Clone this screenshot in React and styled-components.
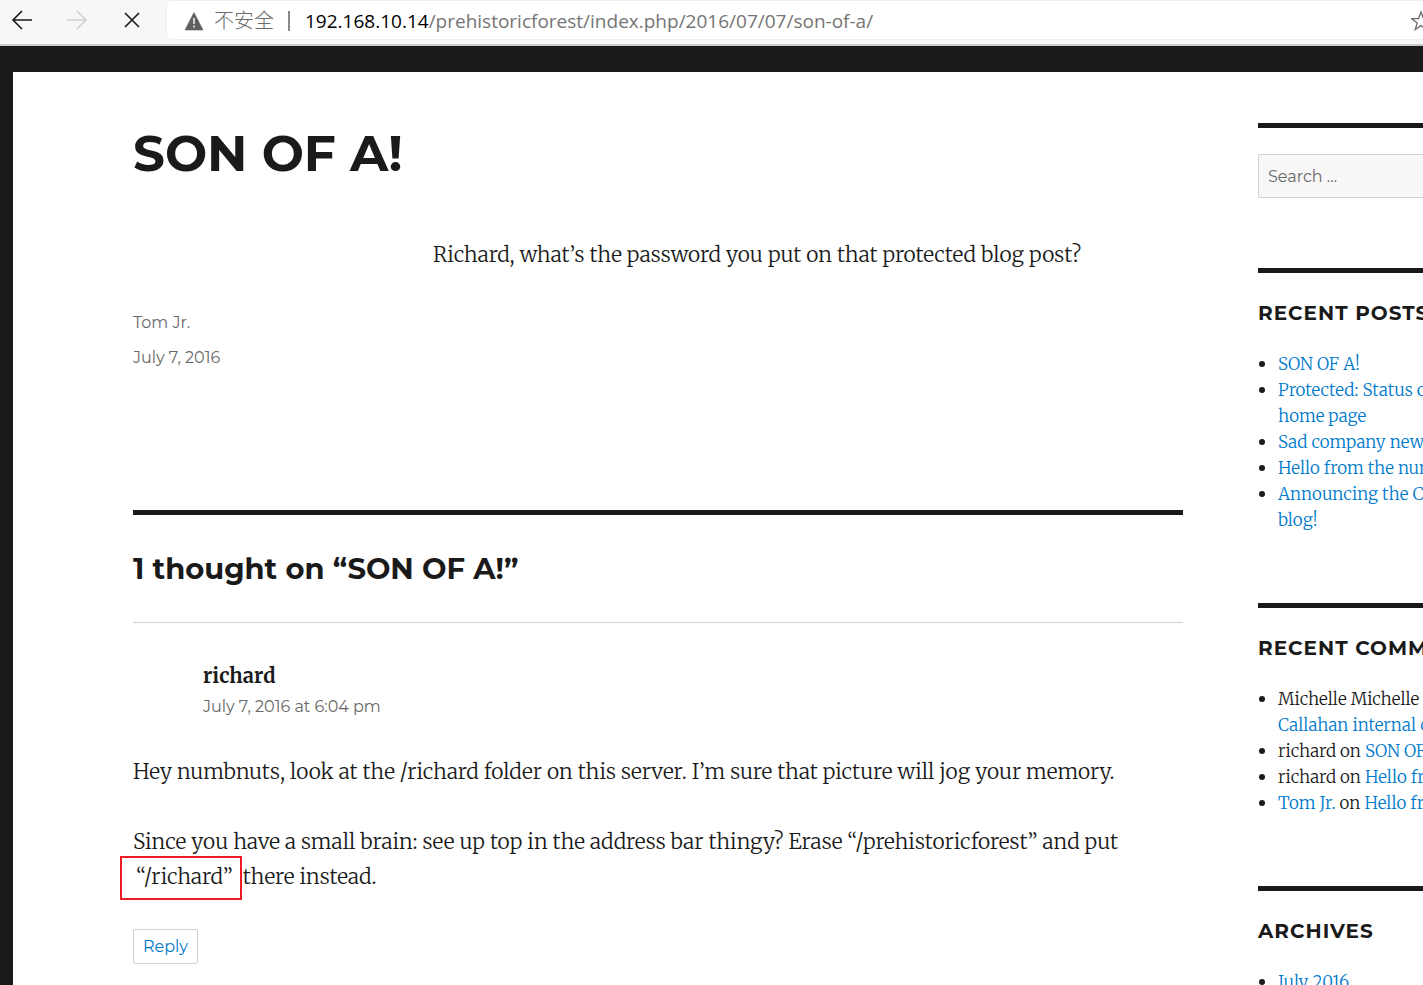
import React from 'react';
import styled, { createGlobalStyle } from 'styled-components';

const ink = '#1a1a1a';
const muted = '#686868';
const blue = '#007acc';
const sans = "Montserrat, Inter, 'Liberation Sans', sans-serif";
const serif = "Merriweather, 'Liberation Serif', serif";
const chromeFont = "'Segoe UI', 'Open Sans', 'Noto Sans CJK SC', sans-serif";

const GlobalStyle = createGlobalStyle`
  *, *::before, *::after { box-sizing: border-box; }
  body { margin: 0; background: ${ink}; color: ${ink}; font-family: ${serif}; font-kerning: none; }
  h1, h2, p, ul, ol { margin: 0; padding: 0; }
  h1, h2 { font-kerning: normal; }
`;

const Shell = styled.div`
  display: flex;
  flex-direction: column;
  height: 100vh;
  overflow: hidden;
`;

const Toolbar = styled.header`
  display: flex;
  align-items: center;
  flex: none;
  height: 46px;
  padding: 0 0 4px 10px;
  background: #f7f7f7;
  border-bottom: 2px solid #cbcbcb;
`;

const NavButton = styled.button`
  display: flex;
  align-items: center;
  justify-content: center;
  width: 24px;
  height: 24px;
  margin-right: ${(p) => p.$gap || 31}px;
  padding: 0;
  border: 0;
  background: none;
  color: ${(p) => (p.disabled ? '#d0d0d0' : ink)};

  svg {
    flex: none;
  }
`;

const AddressBar = styled.div`
  display: flex;
  align-items: center;
  flex: 1;
  min-width: 0;
  height: 38px;
  padding: 1px 0 0 17px;
  background: #fff;
  border-radius: 5px 0 0 5px;
  box-shadow: 0 0 3px rgba(0, 0, 0, 0.1);
  font: 20px/28px ${chromeFont};
  color: #6b6b6b;
  white-space: nowrap;
`;

const Insecure = styled.span`
  margin-left: 10px;
  font-weight: 300;
`;

const Divider = styled.span`
  width: 2px;
  height: 20px;
  margin: 0 15px 0 14px;
  background: #8a8a8a;
`;

const Url = styled.span`
  flex: 1;
  font-size: 19px;
  color: #757575;
`;

const Host = styled.span`
  color: #000;
`;

const StarButton = styled(NavButton)`
  width: 12px;
  margin: 0;
  justify-content: flex-start;
  overflow: hidden;
  color: #6b6b6b;
`;

const Viewport = styled.div`
  flex: 1;
  min-height: 0;
  padding: 26px 0 0 13px;
  overflow: hidden;
`;

const Site = styled.div`
  display: flex;
  gap: 75px;
  min-height: 100%;
  padding: 51px 0 0 120px;
  background: #fff;
`;

const Main = styled.main`
  flex: 1;
  min-width: 0;
`;

const Title = styled.h1`
  margin-bottom: 52px;
  font: 700 50px/62px ${sans};
`;

const PostText = styled.p`
  margin: 0 0 33px 300px;
  font: 300 21px/35px ${serif};
`;

const Meta = styled.footer`
  display: flex;
  flex-direction: column;
  margin-bottom: 135px;
  font: 16px/35px ${sans};
  color: ${muted};
`;

const Comments = styled.section`
  border-top: 5px solid ${ink};
  padding-top: 36px;
`;

const CommentsTitle = styled.h2`
  margin-bottom: 35px;
  font: 700 29px/36px ${sans};
`;

const Comment = styled.article`
  padding-top: 35px;
  border-top: 1px solid #d1d1d1;
`;

const CommentHead = styled.header`
  padding-left: 70px;
  margin-bottom: 33px;
`;

const Author = styled.div`
  font-size: 20px;
  line-height: 35px;
  font-weight: 700;
`;

const CommentDate = styled.time`
  display: block;
  font: 16px/28px ${sans};
  color: ${muted};
`;

const CommentText = styled.p`
  margin-bottom: 35px;
  font: 300 21px/35px ${serif};
`;

const Marked = styled.span`
  position: relative;
  display: inline-block;
  padding: 0 5px 0 3px;

  &::after {
    content: '';
    position: absolute;
    inset: -3px -4px -6px -13px;
    border: 2px solid #ed1c24;
  }
`;

const Reply = styled.button`
  display: block;
  height: 35px;
  padding: 0 9px;
  border: 1px solid #d1d1d1;
  border-radius: 2px;
  background: #fff;
  font: 16px/33px ${sans};
  color: ${blue};
`;

const Sidebar = styled.aside`
  flex: none;
  width: 165px;
`;

const Widget = styled.section`
  margin-bottom: 70px;
  padding-top: 26px;
  border-top: 5px solid ${ink};
`;

const WidgetTitle = styled.h2`
  margin-bottom: 24px;
  font: 700 20px/28px ${sans};
  letter-spacing: 1px;
  text-transform: uppercase;
  white-space: nowrap;
`;

const SearchInput = styled.input`
  display: block;
  width: 100%;
  height: 44px;
  padding: 0 9px;
  border: 1px solid #d1d1d1;
  border-right: 0;
  border-radius: 2px 0 0 2px;
  background: #f7f7f7;
  font: 16px/24px ${sans};

  &::placeholder {
    color: ${muted};
    opacity: 1;
  }
`;

const List = styled.ul`
  padding-left: 20px;
  font: 300 17px/26px ${serif};
  white-space: nowrap;
`;

const Item = styled.li`
  &::marker {
    font-size: 18px;
  }
`;

const Link = styled.a`
  color: ${blue};
  text-decoration: none;
`;

const BackIcon = () => (
  <svg width="24" height="24" viewBox="0 0 24 24" fill="none" stroke="currentColor" strokeWidth="1.6">
    <path d="M22 12H3M12 3L3 12l9 9" />
  </svg>
);

const ForwardIcon = () => (
  <svg width="24" height="24" viewBox="0 0 24 24" fill="none" stroke="currentColor" strokeWidth="1.6">
    <path d="M2 12h19M12 3l9 9-9 9" />
  </svg>
);

const StopIcon = () => (
  <svg width="24" height="24" viewBox="0 0 24 24" fill="none" stroke="currentColor" strokeWidth="1.6">
    <path d="M5 5l14 14M19 5L5 19" />
  </svg>
);

const WarningIcon = () => (
  <svg width="20" height="20" viewBox="0 0 20 20">
    <path d="M10 1.5L19 19H1z" fill="#606060" stroke="#606060" strokeWidth="0.6" strokeLinejoin="round" />
    <path d="M10 7v6M10 14.5v2" stroke="#fff" strokeWidth="1.4" />
  </svg>
);

const StarIcon = () => (
  <svg width="24" height="24" viewBox="0 0 24 24" fill="none" stroke="currentColor" strokeWidth="1.3">
    <path d="M10 3l2.4 6.5 6.9.2-5.5 4.2 2 6.6L10 16.6l-5.8 3.9 2-6.6L.8 9.7l6.8-.2z" />
  </svg>
);

export default function App() {
  return (
    <>
      <GlobalStyle />
      <Shell>
        <Toolbar>
          <NavButton aria-label="Back"><BackIcon /></NavButton>
          <NavButton aria-label="Forward" disabled><ForwardIcon /></NavButton>
          <NavButton aria-label="Stop" $gap={23}><StopIcon /></NavButton>
          <AddressBar>
            <WarningIcon />
            <Insecure lang="zh-CN">不安全</Insecure>
            <Divider />
            <Url><Host>192.168.10.14</Host>/prehistoricforest/index.php/2016/07/07/son-of-a/</Url>
            <StarButton aria-label="Add to favorites"><StarIcon /></StarButton>
          </AddressBar>
        </Toolbar>
        <Viewport>
          <Site>
            <Main>
              <Title>SON OF A!</Title>
              <PostText>Richard, what’s the password you put on that protected blog post?</PostText>
              <Meta>
                <span>Tom Jr.</span>
                <time>July 7, 2016</time>
              </Meta>
              <Comments>
                <CommentsTitle>1 thought on “SON OF A!”</CommentsTitle>
                <Comment>
                  <CommentHead>
                    <Author>richard</Author>
                    <CommentDate>July 7, 2016 at 6:04 pm</CommentDate>
                  </CommentHead>
                  <CommentText>
                    Hey numbnuts, look at the /richard folder on this server. I’m sure that picture will jog your memory.
                  </CommentText>
                  <CommentText>
                    Since you have a small brain: see up top in the address bar thingy? Erase “/prehistoricforest” and put{' '}
                    <Marked>“/richard”</Marked> there instead.
                  </CommentText>
                  <Reply>Reply</Reply>
                </Comment>
              </Comments>
            </Main>
            <Sidebar>
              <Widget>
                <SearchInput type="search" aria-label="Search for" placeholder="Search …" />
              </Widget>
              <Widget>
                <WidgetTitle>Recent Posts</WidgetTitle>
                <List>
                  <Item><Link href="#son">SON OF A!</Link></Item>
                  <Item><Link href="#status">Protected: Status of restoring company<br />home page</Link></Item>
                  <Item><Link href="#news">Sad company news</Link></Item>
                  <Item><Link href="#hello">Hello from the numbnut</Link></Item>
                  <Item><Link href="#blog">Announcing the Callahan internal company<br />blog!</Link></Item>
                </List>
              </Widget>
              <Widget>
                <WidgetTitle>Recent Comments</WidgetTitle>
                <List>
                  <Item>Michelle Michelle on <Link href="#blog">Announcing the<br />Callahan internal company blog!</Link></Item>
                  <Item>richard on <Link href="#son">SON OF A!</Link></Item>
                  <Item>richard on <Link href="#hello">Hello from the numbnut</Link></Item>
                  <Item><Link href="#tom">Tom Jr.</Link> on <Link href="#hello">Hello from the numbnut</Link></Item>
                </List>
              </Widget>
              <Widget>
                <WidgetTitle>Archives</WidgetTitle>
                <List>
                  <Item><Link href="#archive">July 2016</Link></Item>
                </List>
              </Widget>
            </Sidebar>
          </Site>
        </Viewport>
      </Shell>
    </>
  );
}
